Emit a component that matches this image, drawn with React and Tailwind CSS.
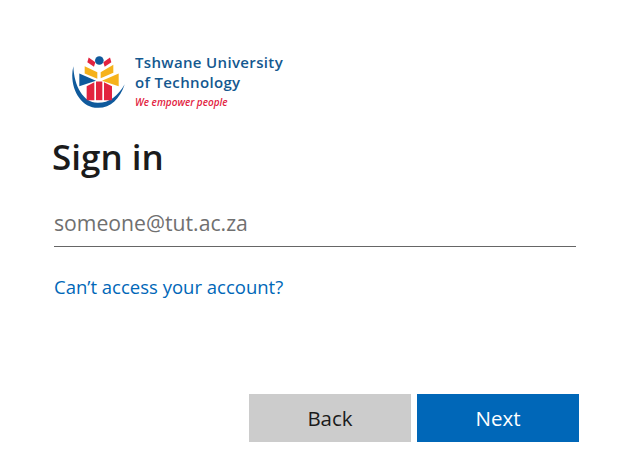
import React from "react";

const font = { fontFamily: '"Open Sans", sans-serif' };

// TUT emblem, drawn from the reference crop
function Emblem() {
  return (
    <svg width="58" height="57" viewBox="30 20 174 170" className="shrink-0">
      <path d="M40 62C26 120 58 188 115 187C152 186 180 160 194 116C174 152 146 173 112 172C70 170 42 122 40 62Z" fill="#0f5a9c" />
      <path d="M86 36L106 50L102 64L82 50Z" fill="#e2233f" />
      <path d="M150 36L130 50L134 64L154 50Z" fill="#e2233f" />
      <path d="M74 62L112 80V100L74 84Z" fill="#f6b21b" />
      <path d="M160 58L122 80V98L160 82Z" fill="#f6b21b" />
      <path d="M58 84L108 106L58 122Z" fill="#0f5a9c" />
      <path d="M176 84L126 106L176 122Z" fill="#f6b21b" />
      <path d="M80 122L103 110V164H80Z" fill="#e2233f" />
      <path d="M108 108H127V164H108Z" fill="#e2233f" />
      <path d="M132 110L156 122V164H132Z" fill="#e2233f" />
      <circle cx="118" cy="45" r="13" fill="#0f5a9c" />
    </svg>
  );
}

function Logo() {
  return (
    <div className="flex items-start ml-[18px] h-[57px]">
      <Emblem />
      <div className="ml-[7px] flex flex-col" style={{ fontFamily: '"Open Sans", sans-serif' }}>
        <span className="text-[15px] leading-[20px] font-semibold text-[#14588f] tracking-[0.35px] whitespace-nowrap">Tshwane University</span>
        <span className="text-[15px] leading-[20px] font-semibold text-[#14588f] tracking-[0.35px] whitespace-nowrap">of Technology</span>
        <span className="text-[10px] leading-[13px] mt-[4px] italic font-semibold text-[#e2233f] whitespace-nowrap">We empower people</span>
      </div>
    </div>
  );
}

export default function App() {
  return (
    <div className="w-[639px] h-[467px] bg-white overflow-hidden pt-[52px] pl-[52px]" style={font}>
      <Logo />
      <h1 className="mt-[26px] text-[35px] leading-[44px] font-semibold text-[#1b1b1b]">Sign in</h1>
      <div className="ml-[2px] mt-[20px] w-[522px] h-[48px] border-b border-[#666] flex items-center">
        <span className="text-[21.2px] text-[#707070]">someone@tut.ac.za</span>
      </div>
      <a className="block ml-[2px] mt-[27px] text-[18.5px] leading-[26px] text-[#0067b8]">Can’t access your account?</a>
      <div className="flex gap-[6px] ml-[197px] mt-[94px]">
        <button className="w-[162px] h-[48px] bg-[#cccccc] text-[20.5px] text-[#1b1b1b]">Back</button>
        <button className="w-[162px] h-[48px] bg-[#0067b8] text-[20.5px] font-medium text-white">Next</button>
      </div>
    </div>
  );
}
